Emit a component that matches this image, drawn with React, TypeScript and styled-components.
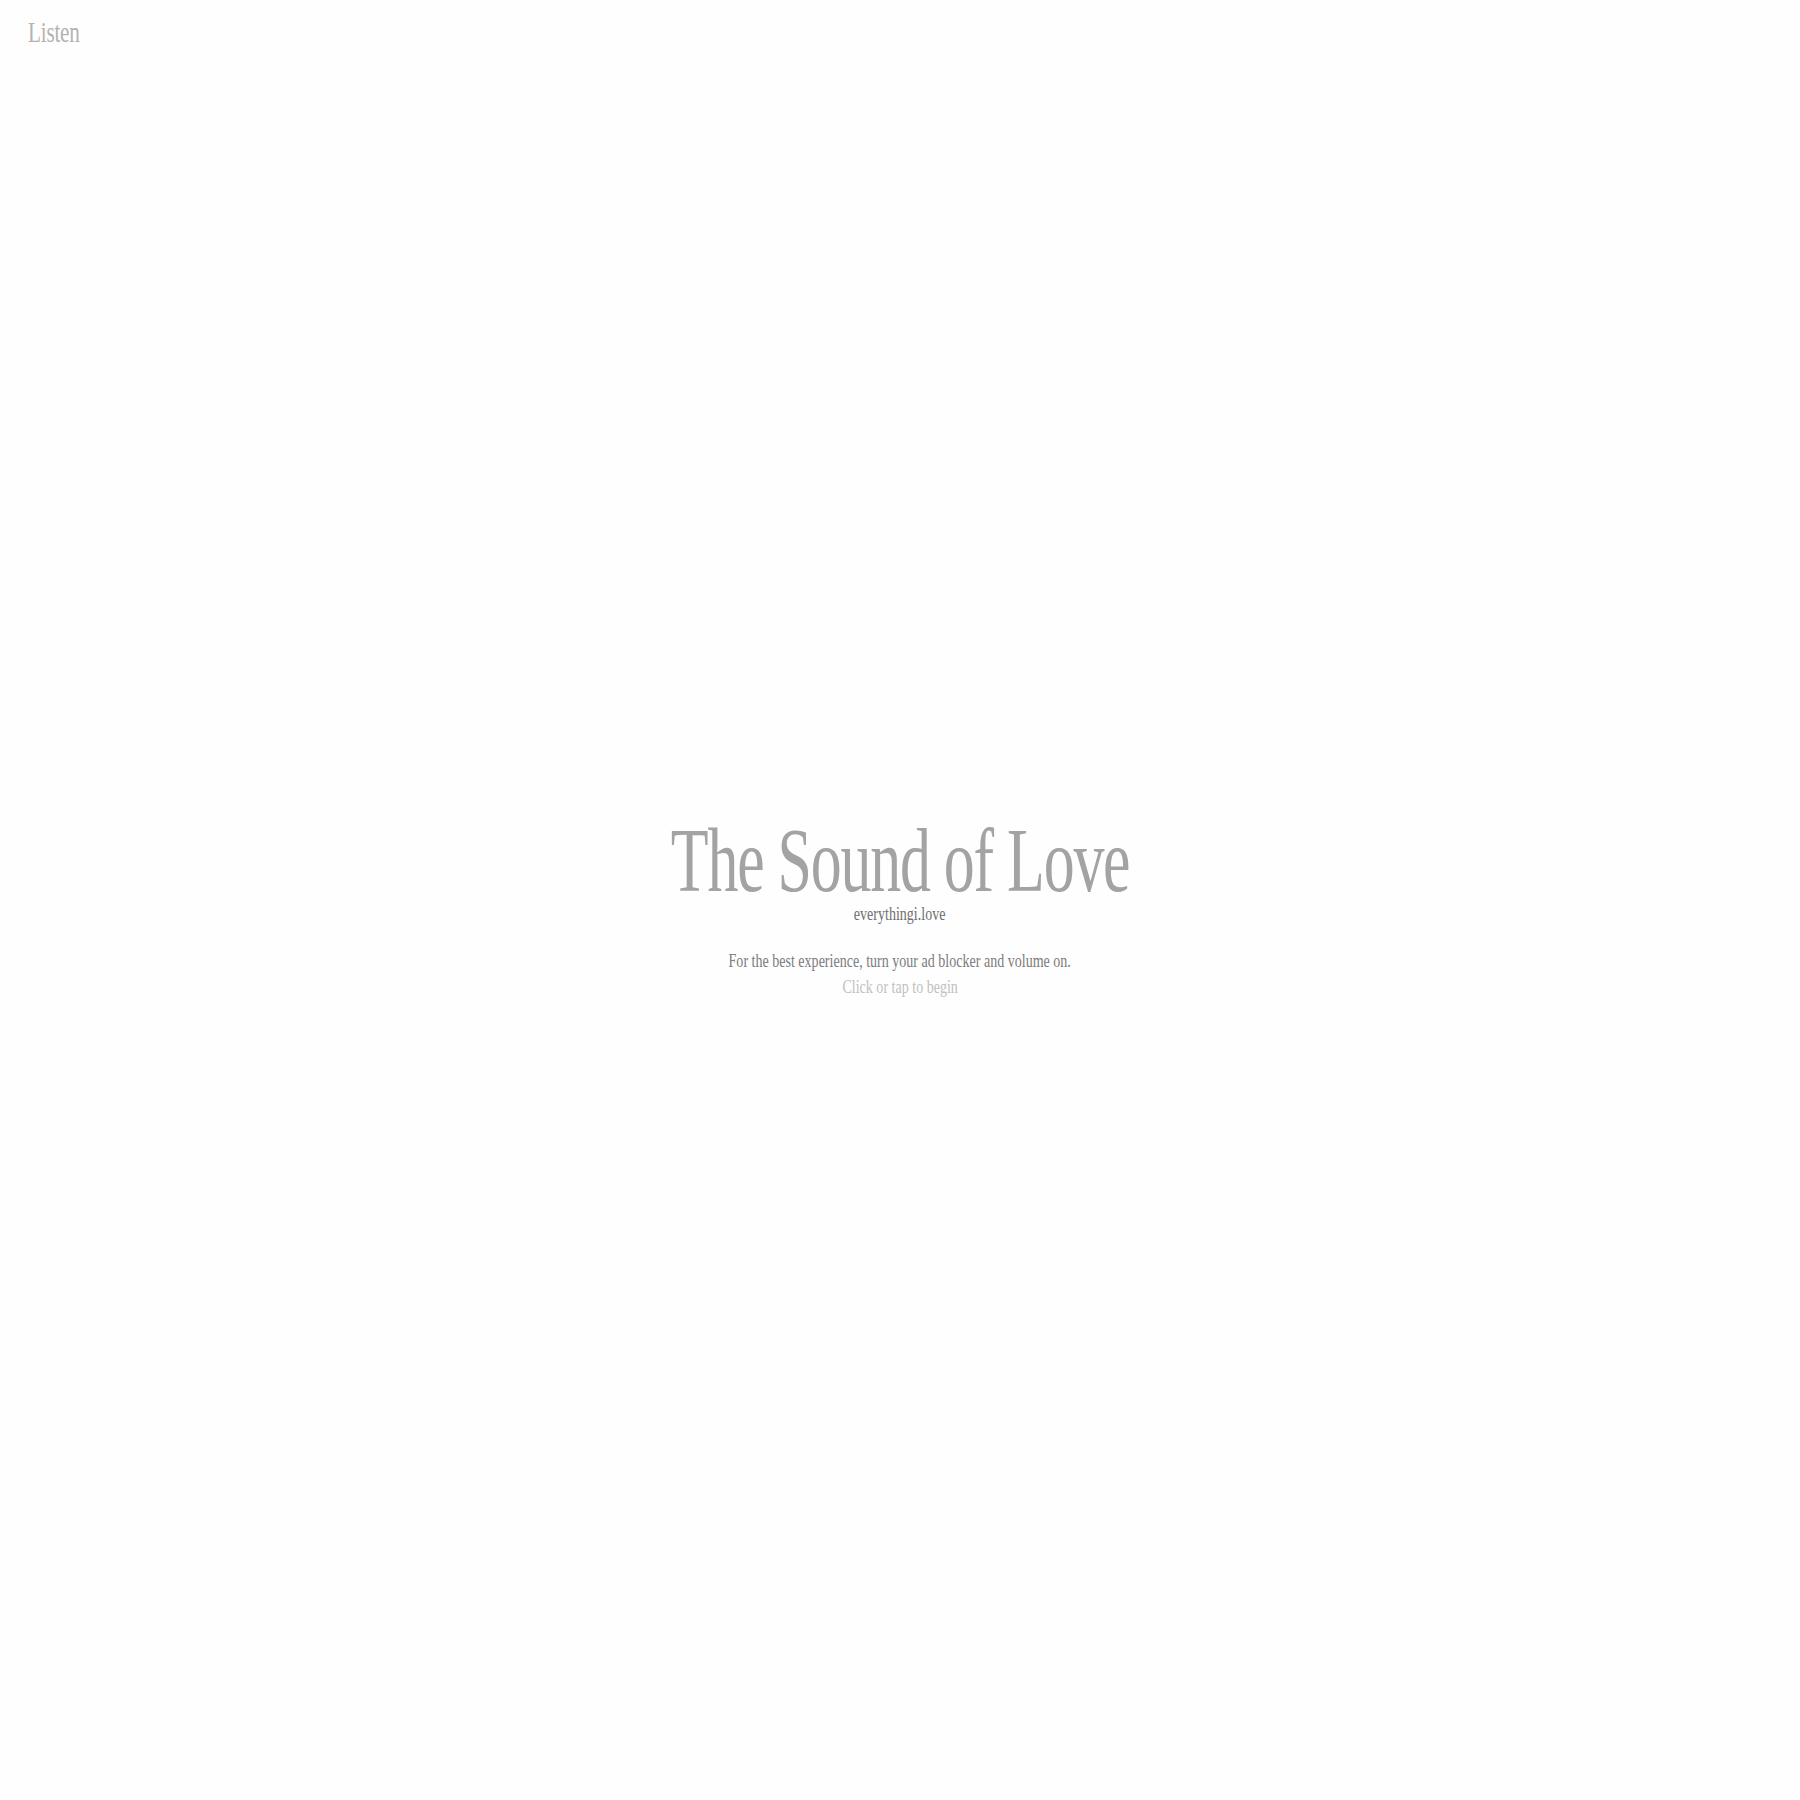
import React from "react";
import styled, { createGlobalStyle } from "styled-components";

const Global = createGlobalStyle`
  html, body { margin: 0; padding: 0; background: #fefefe; }
  body { font-family: "Liberation Serif", "Times New Roman", serif; }
`;

const Page = styled.div`
  min-height: 100vh;
  display: flex;
  flex-direction: column;
`;

const Header = styled.header`
  padding: 16px 0 0 28px;
  height: 60px;
  box-sizing: border-box;
`;

const ListenLink = styled.span`
  display: inline-block;
  font-size: 29px;
  color: #b3b3b3;
  transform: scaleX(0.73);
  transform-origin: left center;
  letter-spacing: -0.01em;
`;

const Center = styled.main`
  flex: 1;
  display: flex;
  flex-direction: column;
  align-items: center;
  justify-content: center;
  padding-bottom: 40px;
  text-align: center;
`;

const Title = styled.h1`
  margin: 0;
  font-weight: 400;
  font-size: 91px;
  line-height: 80px;
  color: #a3a3a3;
  letter-spacing: -0.02em;
  transform: scaleX(0.68);
  white-space: nowrap;
`;

const Line = styled.p<{ $tone: string; $gap: number }>`
  margin: ${(p) => p.$gap}px 0 0;
  font-size: 19.5px;
  line-height: 1.3;
  color: ${(p) => p.$tone};
  transform: scaleX(0.72);
  white-space: nowrap;
`;

export default function App() {
  return (
    <>
      <Global />
      <Page>
        <Header>
          <ListenLink>Listen</ListenLink>
        </Header>
        <Center>
          <Title>The Sound of Love</Title>
          <Line $tone="#6e6e6e" $gap={0}>everythingi.love</Line>
          <Line $tone="#7c7c7c" $gap={22}>
            For the best experience, turn your ad blocker and volume on.
          </Line>
          <Line $tone="#c0c0c0" $gap={0}>Click or tap to begin</Line>
        </Center>
      </Page>
    </>
  );
}
